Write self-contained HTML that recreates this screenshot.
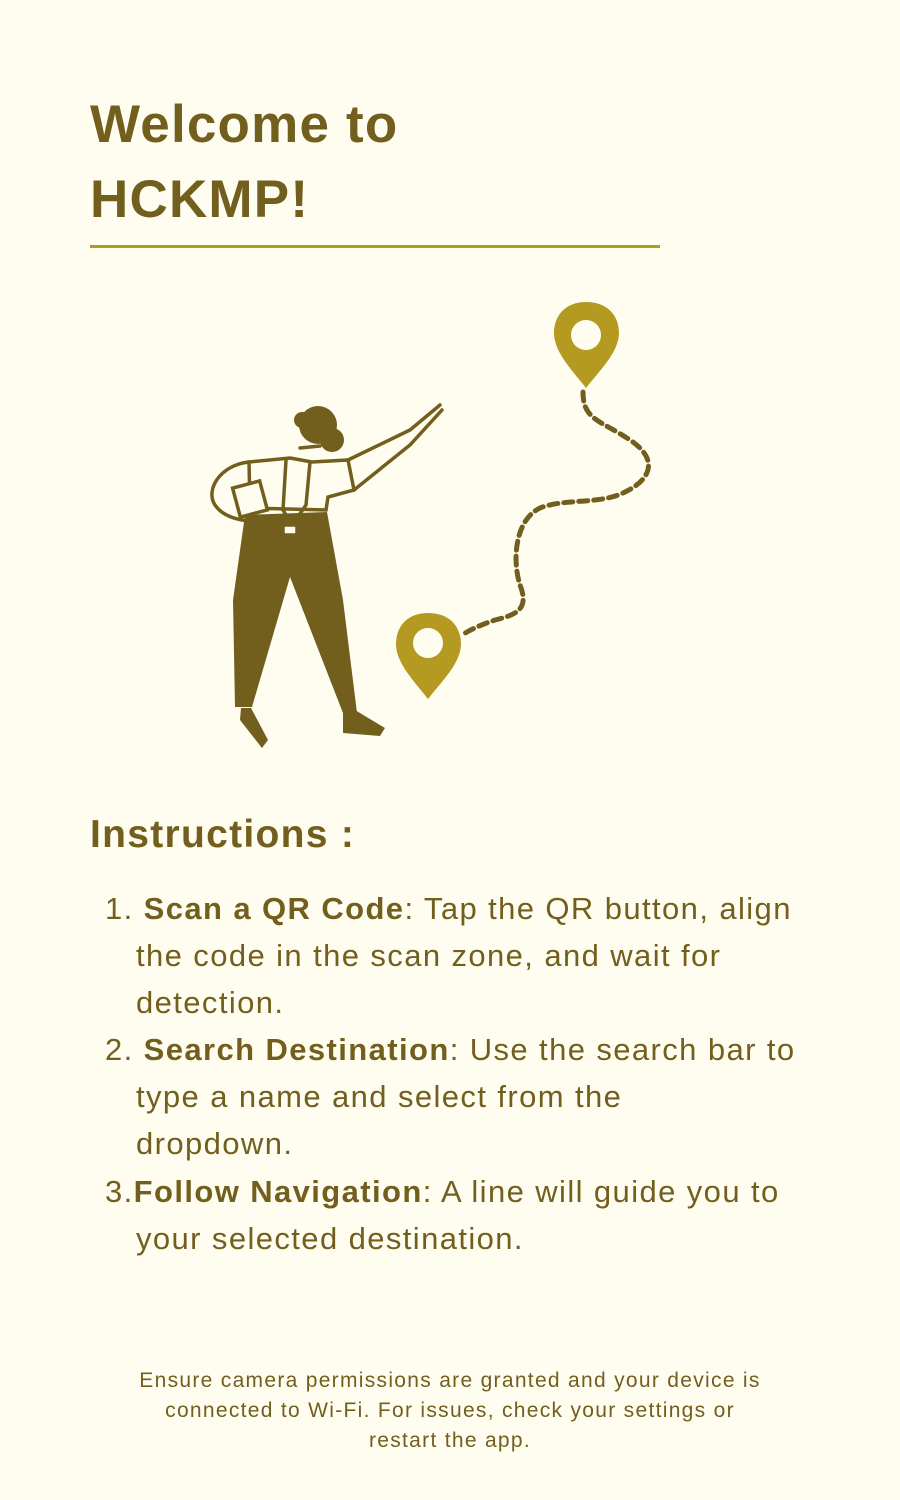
<!DOCTYPE html>
<html><head><meta charset="utf-8"><style>
body{margin:0;background:#fffdf0;}
.p{position:relative;width:900px;height:1500px;overflow:hidden;background:#fffdf0;font-family:"Liberation Sans",sans-serif;color:#725f1e;}
.t{position:absolute;left:90px;font-weight:bold;font-size:53px;line-height:60px;white-space:nowrap;letter-spacing:1.2px}
.rule{position:absolute;left:90px;top:245px;width:570px;height:3px;background:#b59a22}
.h{position:absolute;left:90px;top:812px;font-size:39px;font-weight:bold;line-height:46px;letter-spacing:1.3px}
.l{position:absolute;font-size:31px;line-height:40px;white-space:nowrap;letter-spacing:1.4px}
.f{position:absolute;left:0;width:900px;text-align:center;font-size:21px;line-height:30px;letter-spacing:1.3px}
</style></head><body><div class="p">
<div class="t" style="top:95px">Welcome to</div>
<div class="t" style="top:170px">HCKMP!</div>
<div class="rule"></div>
<svg style="position:absolute;left:0;top:0" width="900" height="800">
<path d="M583 392 C583 420 600 420 630 440 C660 460 650 480 625 492 C600 505 565 498 540 508 C515 520 512 560 520 585 C530 610 515 615 495 620 C480 625 470 630 462 635" fill="none" stroke="#725f1e" stroke-width="5" stroke-dasharray="9 6" stroke-linecap="round"/>
<path d="M586 302 C608 302 619 316 619 333 C619 352 600 370 586 388 C572 370 554 352 554 333 C554 316 565 302 586 302Z" fill="#b59a22"/>
<circle cx="586" cy="335" r="15" fill="#fffdf0"/>
<path d="M428 613 C450 613 461 627 461 644 C461 663 442 681 428 699 C414 681 396 663 396 644 C396 627 407 613 428 613Z" fill="#b59a22"/>
<circle cx="428" cy="643" r="15" fill="#fffdf0"/>
<g fill="#725f1e">
<path d="M245 515 L327 512 L343 600 L357 713 L343 713 L290 577 L252 707 L235 707 L233 600Z"/>
<path d="M241 708 L251 708 L268 740 L262 748 L240 720Z"/>
<path d="M343 710 L355 710 L385 728 L380 736 L343 733Z"/>
<circle cx="318" cy="425" r="19"/><circle cx="332" cy="440" r="12"/><circle cx="302" cy="420" r="8"/>
</g>
<g fill="none" stroke="#725f1e" stroke-width="3.5" stroke-linecap="round">
<path d="M249 462 L290 458 L312 462 L348 460 L354 490 L328 497 L326 510 L250 508Z" fill="#fffdf0"/>
<path d="M348 460 L410 430 L440 405"/><path d="M354 490 L410 445 L442 410"/>
<path d="M249 462 C220 465 205 490 215 505 C225 520 250 523 268 520"/>
<path d="M286 460 L283 510 L292 525 L306 505 L310 462"/>
<rect x="236" y="484" width="28" height="30" transform="rotate(-15 250 499)" fill="#fffdf0"/>
<rect x="283" y="525" width="14" height="10" fill="#fffdf0"/>
<path d="M300 448 L320 446"/>
</g>
</svg>
<div class="h">Instructions :</div>
<div class="l" style="left:105px;top:889px">1.&nbsp;<b>Scan a QR Code</b>: Tap the QR button, align</div>
<div class="l" style="left:136px;top:936px">the code in the scan zone, and wait for</div>
<div class="l" style="left:136px;top:983px">detection.</div>
<div class="l" style="left:105px;top:1030px">2.&nbsp;<b>Search Destination</b>: Use the search bar to</div>
<div class="l" style="left:136px;top:1077px">type a name and select from the</div>
<div class="l" style="left:136px;top:1124px">dropdown.</div>
<div class="l" style="left:105px;top:1172px">3.<b>Follow Navigation</b>: A line will guide you to</div>
<div class="l" style="left:136px;top:1219px">your selected destination.</div>
<div class="f" style="top:1366px">Ensure camera permissions are granted and your device is</div>
<div class="f" style="top:1396px">connected to Wi-Fi. For issues, check your settings or</div>
<div class="f" style="top:1426px">restart the app.</div>
</div></body></html>
